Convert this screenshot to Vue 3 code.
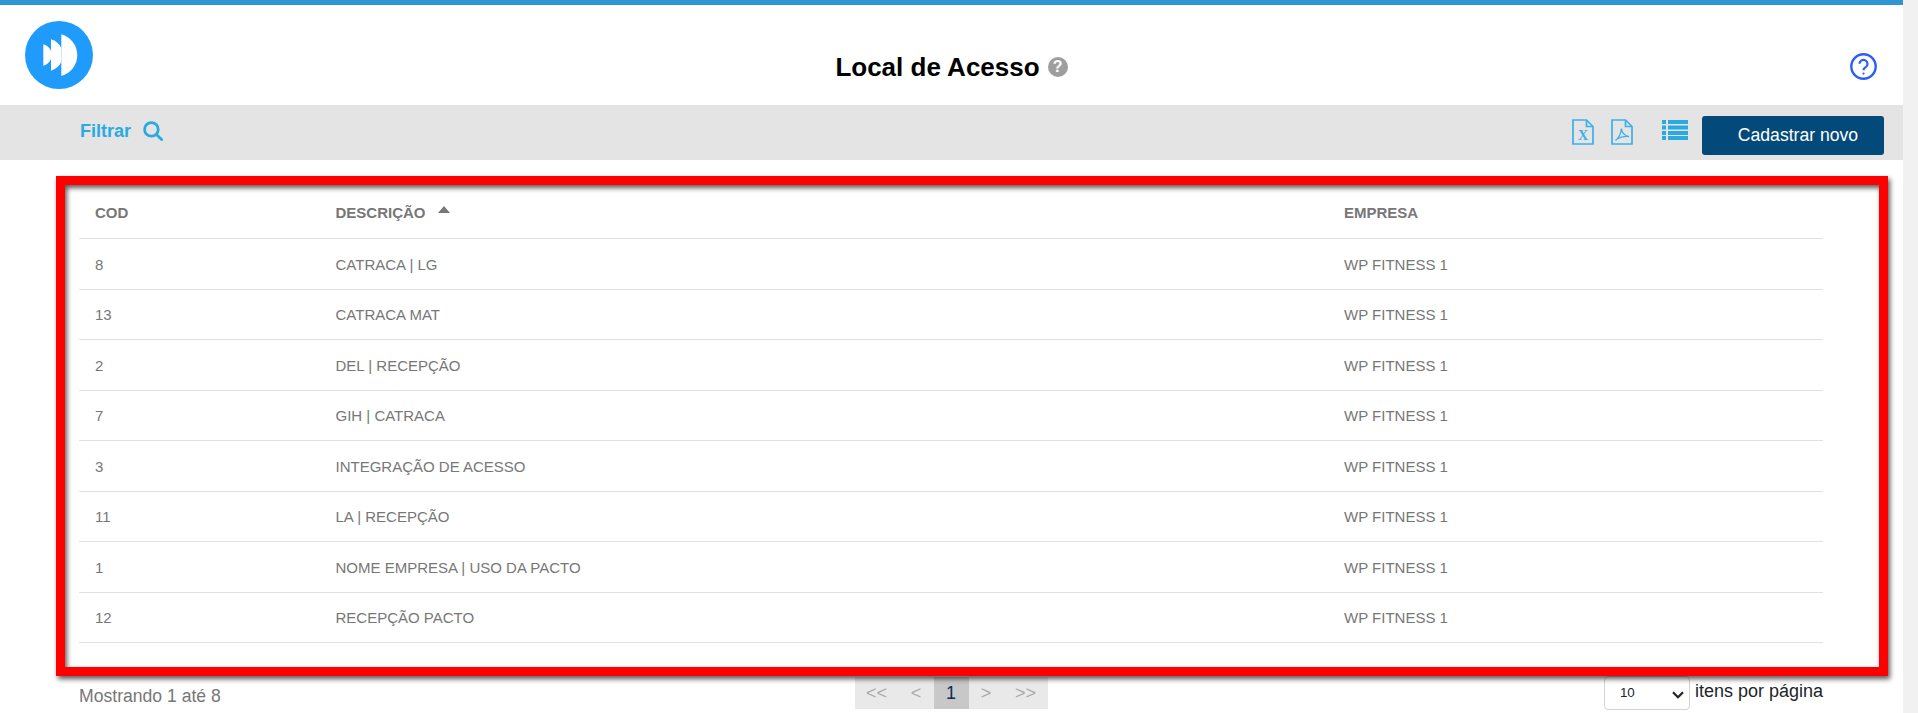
<template>
  <div class="page">
    <div class="main">
      <div class="top-line"></div>

      <header class="header">
        <svg class="logo" viewBox="0 0 68 68">
          <circle cx="34" cy="34" r="34" fill="#1e9bfb" />
          <path d="M36.3 13.3A21.6 21.6 0 0 1 36.3 55Z" fill="#fff" />
          <path d="M26 18.3A17.1 17.1 0 0 1 36.3 27V41A17.1 17.1 0 0 1 26 49.7Z" fill="#fff" />
          <path d="M18.3 23.3A11.3 11.3 0 0 1 26 30V38A11.3 11.3 0 0 1 18.3 44.7Z" fill="#fff" />
        </svg>
        <h1 class="title">
          Local de Acesso
          <span class="title-help">?</span>
        </h1>
        <svg class="help" viewBox="0 0 27 27" fill="none" stroke="#2b5cff" stroke-width="2.4">
          <circle cx="13.5" cy="13.5" r="12.2" />
          <path d="M9.5 10.8a4 4 0 1 1 6.2 3.4c-1.4.9-2.2 1.6-2.2 3" stroke-width="2.2" />
          <circle cx="13.5" cy="20.6" r="1.1" fill="#2b5cff" stroke="none" />
        </svg>
      </header>

      <div class="toolbar">
        <a class="filter">
          Filtrar
          <svg class="filter-icon" viewBox="0 0 20 20" fill="none" stroke="#29abe2" stroke-width="2.8">
            <circle cx="8.4" cy="8.4" r="6.8" />
            <path d="M13.4 13.4l5.2 5.2" stroke-linecap="round" />
          </svg>
        </a>
        <div class="actions">
          <svg class="file-icon" viewBox="0 0 22 26" fill="none" stroke="#3bb0ea" stroke-width="1.7">
            <path d="M1 1H14.5L21 7.5V25H1Z" />
            <path d="M14.5 1V7.5H21" />
            <text x="11" y="21" text-anchor="middle" class="file-x">X</text>
          </svg>
          <svg class="file-icon pdf" viewBox="0 0 22 26" fill="none" stroke="#3bb0ea" stroke-width="1.7">
            <path d="M1 1H14.5L21 7.5V25H1Z" />
            <path d="M14.5 1V7.5H21" />
            <path d="M4.5 21.5C7.5 19 10 14 10.4 9.5C10.8 14 13 16.6 18 17.6C14 17 9 18 6 20" stroke-width="1.3" />
          </svg>
          <svg class="list-icon" viewBox="0 0 26 20" fill="#29abe2">
            <rect x="0" y="0" width="4" height="4" />
            <rect x="6" y="0" width="20" height="4" />
            <rect x="0" y="5.5" width="4" height="4" />
            <rect x="6" y="5.5" width="20" height="4" />
            <rect x="0" y="11" width="4" height="4" />
            <rect x="6" y="11" width="20" height="4" />
            <rect x="0" y="16" width="4" height="4" />
            <rect x="6" y="16" width="20" height="4" />
          </svg>
          <button class="new-btn">Cadastrar novo</button>
        </div>
      </div>

      <section class="content">
        <table class="grid">
          <colgroup>
            <col class="col-cod" />
            <col class="col-desc" />
            <col />
          </colgroup>
          <thead>
            <tr>
              <th>COD</th>
              <th>
                DESCRIÇÃO
                <span class="sort"></span>
              </th>
              <th>EMPRESA</th>
            </tr>
          </thead>
          <tbody>
            <tr v-for="row in rows" :key="row.cod">
              <td>{{ row.cod }}</td>
              <td>{{ row.desc }}</td>
              <td>WP FITNESS 1</td>
            </tr>
          </tbody>
        </table>

        <div class="footer">
          <span class="count">Mostrando 1 até 8</span>
          <div class="pager">
            <span class="wide">&lt;&lt;</span>
            <span>&lt;</span>
            <span class="active">1</span>
            <span>&gt;</span>
            <span class="wide">&gt;&gt;</span>
          </div>
          <div class="per-page">
            <div class="size-wrap">
              <select class="size">
                <option>10</option>
                <option>20</option>
                <option>50</option>
              </select>
              <svg class="size-arrow" viewBox="0 0 12 8" fill="none" stroke="#222" stroke-width="2.2">
                <path d="M1 1.2l5 5 5-5" />
              </svg>
            </div>
            <span>itens por página</span>
          </div>
        </div>

        <div class="highlight"></div>
      </section>
    </div>
    <div class="scrollbar"></div>
  </div>
</template>

<script setup>
const rows = [
  { cod: 8, desc: 'CATRACA | LG' },
  { cod: 13, desc: 'CATRACA MAT' },
  { cod: 2, desc: 'DEL | RECEPÇÃO' },
  { cod: 7, desc: 'GIH | CATRACA' },
  { cod: 3, desc: 'INTEGRAÇÃO DE ACESSO' },
  { cod: 11, desc: 'LA | RECEPÇÃO' },
  { cod: 1, desc: 'NOME EMPRESA | USO DA PACTO' },
  { cod: 12, desc: 'RECEPÇÃO PACTO' }
]
</script>

<style>
html,
body {
  margin: 0;
  overflow: hidden;
  background: #fff;
}
</style>

<style scoped>
.page {
  display: flex;
  height: 713px;
  font-family: "Liberation Sans", Arial, sans-serif;
  color: #777;
}

.main {
  flex: 1;
  min-width: 0;
}

.scrollbar {
  width: 15px;
  background: #f1f1f1;
}

.top-line {
  height: 5px;
  background: #3096d3;
}

.header {
  position: relative;
  display: flex;
  align-items: center;
  justify-content: center;
  height: 100px;
}

.logo {
  position: absolute;
  left: 25px;
  top: 16px;
  width: 68px;
  height: 68px;
}

.help {
  position: absolute;
  right: 26px;
  top: 48px;
  width: 27px;
  height: 27px;
}

.title {
  display: flex;
  align-items: center;
  gap: 8px;
  margin: 24px 0 0;
  font-size: 26px;
  font-weight: 700;
  color: #000;
}

.title-help {
  display: flex;
  align-items: center;
  justify-content: center;
  width: 20px;
  height: 20px;
  border-radius: 50%;
  background: #9e9e9e;
  color: #fff;
  font-size: 16px;
}

.toolbar {
  display: flex;
  align-items: center;
  justify-content: space-between;
  height: 55px;
  padding: 0 19px 0 80px;
  background: #e4e4e4;
}

.filter {
  display: flex;
  align-items: center;
  gap: 12px;
  margin-top: -3px;
  font-size: 18px;
  font-weight: 700;
  color: #29abe2;
}

.filter-icon {
  width: 20px;
  height: 20px;
}

.actions {
  display: flex;
  align-items: center;
  margin-top: 6px;
}

.file-icon {
  width: 22px;
  height: 26px;
  margin-right: 17px;
  margin-top: -8px;
}

.file-icon.pdf {
  margin-right: 29px;
}

.file-x {
  font-family: "Liberation Serif", serif;
  font-size: 14px;
  font-weight: 700;
  fill: #3bb0ea;
  stroke: none;
}

.list-icon {
  width: 26px;
  height: 20px;
  margin-right: 14px;
  margin-top: -11px;
}

.new-btn {
  width: 182px;
  height: 39px;
  padding: 0 0 0 10px;
  border: 0;
  border-radius: 3px;
  background: #03497a;
  color: #fff;
  font-family: inherit;
  font-size: 17.6px;
}

.content {
  position: relative;
  padding: 28.4px 80px 0 79px;
}

.grid {
  width: 100%;
  table-layout: fixed;
  border-collapse: collapse;
  font-size: 15px;
}

.col-cod {
  width: 240.5px;
}

.col-desc {
  width: 1008.5px;
}

th,
td {
  height: 50.5px;
  padding: 0 16px;
  box-sizing: border-box;
  border-bottom: 1px solid #dee2e6;
  text-align: left;
  vertical-align: middle;
}

th {
  padding-bottom: 2px;
  font-weight: 700;
}

td {
  font-weight: 400;
}

.sort {
  display: inline-block;
  width: 0;
  height: 0;
  margin-left: 8px;
  border-left: 6px solid transparent;
  border-right: 6px solid transparent;
  border-bottom: 7px solid #777;
  vertical-align: 5px;
}

.footer {
  display: grid;
  grid-template-columns: 1fr auto 1fr;
  align-items: center;
  margin-top: 32.6px;
  font-size: 17.6px;
}

.count {
  margin-top: 8px;
}

.pager {
  display: flex;
  height: 32px;
  background: #e9e9e9;
  color: #aaa;
  font-size: 18px;
}

.pager span {
  display: flex;
  align-items: center;
  justify-content: center;
  width: 35px;
  padding-top: 2px;
  box-sizing: border-box;
}

.pager .wide {
  width: 44px;
}

.pager .active {
  background: #c8c8c8;
  color: #0b2a55;
}

.per-page {
  display: flex;
  align-items: center;
  justify-content: flex-end;
  gap: 5px;
  color: #212529;
}

.per-page span {
  margin-top: -3px;
  font-size: 18px;
}

.size-wrap {
  position: relative;
  display: flex;
}

.size {
  width: 86px;
  height: 34px;
  padding: 0 0 0 15px;
  border: 1px solid #ced4da;
  border-radius: 4px;
  background: #fff;
  color: #212529;
  font-family: inherit;
  font-size: 13.33px;
  appearance: none;
}

.size-arrow {
  position: absolute;
  right: 6px;
  top: 15px;
  width: 12px;
  height: 8px;
  pointer-events: none;
}

.highlight {
  position: absolute;
  left: 56px;
  top: 16px;
  width: 1832px;
  height: 500px;
  box-sizing: border-box;
  border: 9px solid #f00;
  box-shadow: 2px 3px 5px rgba(0, 0, 0, 0.65), inset 2px 3px 5px rgba(0, 0, 0, 0.65);
  pointer-events: none;
}
</style>
